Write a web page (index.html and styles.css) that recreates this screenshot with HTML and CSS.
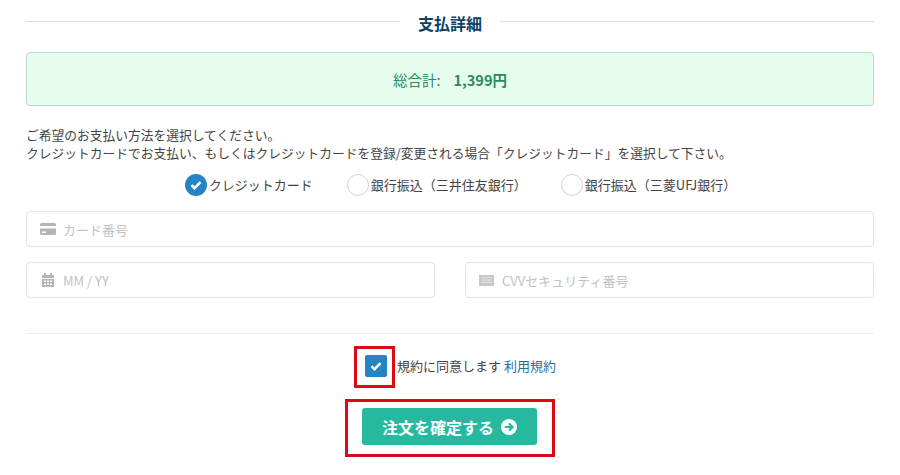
FILE: index.html
```html
<!DOCTYPE html>
<html lang="ja">
<head>
    <meta charset="UTF-8">
    <meta name="viewport" content="width=device-width, initial-scale=1.0">
    <title>支払詳細</title>
    <link rel="stylesheet" href="styles.css">
</head>
<body>
    <div class="container">
        <h2 class="section-title"><span>支払詳細</span></h2>
        <div class="total-box">総合計:<strong>1,399円</strong></div>
        <p class="lead">ご希望のお支払い方法を選択してください。<br>クレジットカードでお支払い、もしくはクレジットカードを登録/変更される場合「クレジットカード」を選択して下さい。</p>

        <div class="methods">
            <label class="method">
                <span class="radio radio-on">
                    <svg viewBox="0 0 22 22" width="22" height="22"><path d="M6.500 11.200l3 3 6-6" fill="none" stroke="#fff" stroke-width="2.600"/></svg>
                </span>クレジットカード
            </label>
            <label class="method"><span class="radio"></span>銀行振込（三井住友銀行）</label>
            <label class="method"><span class="radio"></span>銀行振込（三菱UFJ銀行）</label>
        </div>

        <div class="field">
            <svg class="field-icon" viewBox="0 0 16 12" width="16" height="12"><path d="M1.500 0h13A1.500 1.500 0 0 1 16 1.500V3H0V1.500A1.500 1.500 0 0 1 1.500 0zM0 5.500h16v5A1.500 1.500 0 0 1 14.500 12h-13A1.500 1.500 0 0 1 0 10.500zM2 8.500v1.500h4V8.500z" fill="#b5b5b5" fill-rule="evenodd"/></svg>
            <span>カード番号</span>
        </div>
        <div class="field-row">
            <div class="field">
                <svg class="field-icon" viewBox="-2 0 16 14" width="16" height="14"><path d="M2 0h2v2h4V0h2v2h2v3H0V2h2zM0 6h12v8H0zM2 7.500V9h2V7.500zM5 7.500V9h2V7.500zM8 7.500V9h2V7.500zM2 10.500V12h2v-1.500zM5 10.500V12h2v-1.500zM8 10.500V12h2v-1.500z" fill="#b5b5b5" fill-rule="evenodd"/></svg>
                <span>MM / YY</span>
            </div>
            <div class="field">
                <svg class="field-icon" viewBox="0 0 16 11" width="16" height="11"><path d="M0 0h15v11H0z" fill="#c8c8c8"/><path d="M2 2.500h11M2 5h11M2 7.500h11" stroke="#e2e2e2" stroke-width="1"/></svg>
                <span>CVVセキュリティ番号</span>
            </div>
        </div>

        <hr class="divider">

        <div class="agree">
            <span class="mark mark-check">
                <span class="checkbox">
                    <svg viewBox="0 0 22 22" width="22" height="22"><path d="M6.500 11.200l3 3 6-6" fill="none" stroke="#fff" stroke-width="2.400"/></svg>
                </span>
            </span>
            <span class="agree-text">規約に同意します <a href="#">利用規約</a></span>
        </div>

        <div class="submit-row">
            <span class="mark mark-button">
                <button type="button">注文を確定する
                    <svg viewBox="0 0 16 16" width="16" height="16"><circle cx="8" cy="8" r="8" fill="#fff"/><path d="M3.800 8h7.500M8 4.500L11.500 8 8 11.500" fill="none" stroke="#26b99f" stroke-width="2.200"/></svg>
                </button>
            </span>
        </div>
    </div>
</body>
</html>
```

FILE: styles.css
```css
body {
    margin: 0;
    background-color: #fff;
    color: #444;
    font-family: "Noto Sans CJK JP", "Noto Sans", sans-serif;
}
.container {
    padding: 12px 26px 0;
}
.section-title {
    display: flex;
    align-items: center;
    gap: 18px;
    margin: 0 0 18px;
    font-size: 16px;
    line-height: 22px;
    font-weight: 700;
    color: #0f4068;
}
.section-title::before,
.section-title::after {
    content: "";
    flex: 1;
    height: 1px;
    margin-top: -3px;
    background-color: #dcdcdc;
}
.total-box {
    height: 54px;
    box-sizing: border-box;
    display: flex;
    align-items: center;
    justify-content: center;
    gap: 13px;
    background-color: #e6fdee;
    border: 1px solid #b4dcc6;
    border-radius: 4px;
    color: #2b8a5e;
    font-size: 14.500px;
}
.total-box strong {
    font-weight: 700;
}
.lead {
    margin: 20px 0 0;
    font-size: 12.750px;
    line-height: 18px;
}
.methods {
    display: flex;
    justify-content: center;
    gap: 34px;
    margin-top: 12px;
    padding: 0 1px 0 22px;
}
.method {
    display: flex;
    align-items: center;
    gap: 2px;
    font-size: 13px;
    line-height: 22px;
}
.radio {
    display: block;
    width: 22px;
    height: 22px;
    box-sizing: border-box;
    border: 1px solid #d4d4d4;
    border-radius: 50%;
    background-color: #fff;
}
.radio-on {
    border: 0;
    background-color: #2585c4;
}
.radio svg,
.checkbox svg {
    display: block;
}
.field {
    display: flex;
    align-items: center;
    gap: 7px;
    height: 36px;
    box-sizing: border-box;
    margin-top: 15px;
    padding-left: 13px;
    border: 1px solid #e3e3e3;
    border-radius: 4px;
    color: #c2c2c2;
    font-size: 13px;
}
.field-row {
    display: flex;
    gap: 30px;
}
.field-row .field {
    flex: 1;
}
.field-icon {
    flex: none;
}
.divider {
    margin: 35px 0 0;
    border: 0;
    border-top: 1px solid #ececec;
}
.agree {
    display: flex;
    align-items: center;
    justify-content: center;
    gap: 2px;
    margin-top: 12px;
    padding-left: 10px;
    font-size: 13px;
    color: #444;
}
.agree-text {
    margin-bottom: 3px;
}
.agree a {
    color: #1f6f9f;
    text-decoration: none;
}
.mark {
    display: block;
    border: 3px solid #dc0a14;
    box-sizing: border-box;
}
.mark-check {
    width: 41px;
    height: 42px;
    padding: 6px 8px;
}
.checkbox {
    display: block;
    width: 22px;
    height: 22px;
    border-radius: 2px;
    background-color: #2585c4;
}
.submit-row {
    display: flex;
    justify-content: center;
    margin-top: 11px;
}
.mark-button {
    padding: 6px 14px;
    width: 210px;
    height: 58px;
}
button {
    display: flex;
    align-items: center;
    justify-content: center;
    gap: 7px;
    width: 175px;
    height: 37px;
    padding: 0;
    border: none;
    border-radius: 3px;
    background-color: #26b99f;
    color: #fff;
    font-family: inherit;
    font-size: 16px;
    font-weight: 700;
}
```
